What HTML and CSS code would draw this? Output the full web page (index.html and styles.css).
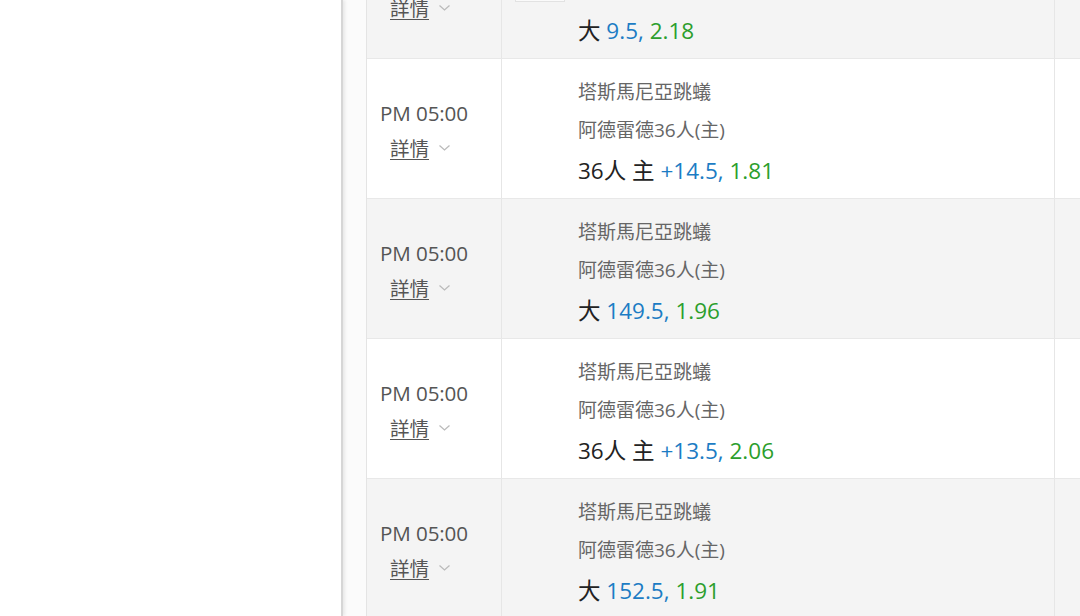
FILE: index.html
```html
<!DOCTYPE html>
<html lang="zh-Hant">
<head>
<meta charset="utf-8">
<link rel="stylesheet" href="styles.css">
</head>
<body>
<div class="layout">
  <aside class="side"></aside>
  <main class="main">
    <div class="table">
      <div class="row grey first">
        <div class="time-cell"><div class="time">PM 05:00</div><div class="detail"><a>詳情</a><svg class="chev" viewBox="0 0 12 8"><path d="M1 1.5 L6 6 L11 1.5" fill="none" stroke="#bbb" stroke-width="1.3"/></svg></div></div>
        <div class="bet-cell"><span class="stub"></span><div class="team">塔斯馬尼亞跳蟻</div><div class="team">阿德雷德36人(主)</div><div class="bet">大 <span class="blue">9.5,</span> <span class="green">2.18</span></div></div>
        <div class="extra"></div>
      </div>
      <div class="row">
        <div class="time-cell"><div class="time">PM 05:00</div><div class="detail"><a>詳情</a><svg class="chev" viewBox="0 0 12 8"><path d="M1 1.5 L6 6 L11 1.5" fill="none" stroke="#bbb" stroke-width="1.3"/></svg></div></div>
        <div class="bet-cell"><div class="team">塔斯馬尼亞跳蟻</div><div class="team">阿德雷德36人(主)</div><div class="bet">36人 主 <span class="blue">+14.5,</span> <span class="green">1.81</span></div></div>
        <div class="extra"></div>
      </div>
      <div class="row grey">
        <div class="time-cell"><div class="time">PM 05:00</div><div class="detail"><a>詳情</a><svg class="chev" viewBox="0 0 12 8"><path d="M1 1.5 L6 6 L11 1.5" fill="none" stroke="#bbb" stroke-width="1.3"/></svg></div></div>
        <div class="bet-cell"><div class="team">塔斯馬尼亞跳蟻</div><div class="team">阿德雷德36人(主)</div><div class="bet">大 <span class="blue">149.5,</span> <span class="green">1.96</span></div></div>
        <div class="extra"></div>
      </div>
      <div class="row">
        <div class="time-cell"><div class="time">PM 05:00</div><div class="detail"><a>詳情</a><svg class="chev" viewBox="0 0 12 8"><path d="M1 1.5 L6 6 L11 1.5" fill="none" stroke="#bbb" stroke-width="1.3"/></svg></div></div>
        <div class="bet-cell"><div class="team">塔斯馬尼亞跳蟻</div><div class="team">阿德雷德36人(主)</div><div class="bet">36人 主 <span class="blue">+13.5,</span> <span class="green">2.06</span></div></div>
        <div class="extra"></div>
      </div>
      <div class="row grey">
        <div class="time-cell"><div class="time">PM 05:00</div><div class="detail"><a>詳情</a><svg class="chev" viewBox="0 0 12 8"><path d="M1 1.5 L6 6 L11 1.5" fill="none" stroke="#bbb" stroke-width="1.3"/></svg></div></div>
        <div class="bet-cell"><div class="team">塔斯馬尼亞跳蟻</div><div class="team">阿德雷德36人(主)</div><div class="bet">大 <span class="blue">152.5,</span> <span class="green">1.91</span></div></div>
        <div class="extra"></div>
      </div>
    </div>
  </main>
</div>
</body>
</html>
```
FILE: styles.css
```css
html, body {
  margin: 0;
  padding: 0;
  height: 100%;
  overflow: hidden;
  background: #fff;
  font-family: "Open Sans", "Noto Sans CJK TC", sans-serif;
}
.layout {
  display: flex;
  height: 616px;
}
.side {
  width: 341px;
  flex: none;
  background: #fff;
  border-right: 2px solid #d6d6d6;
  box-shadow: 2px 0 3px rgba(0,0,0,0.08);
  position: relative;
  z-index: 1;
}
.main {
  flex: 1;
  background: #fbfbfb;
  padding-left: 23px;
  overflow: hidden;
}
.table {
  margin-top: -81px;
  border-left: 1px solid #e4e4e4;
  background: #fff;
}
.row {
  display: flex;
  height: 139px;
  border-bottom: 1px solid #e8e8e8;
  background: #fff;
}
.row.grey {
  background: #f4f4f4;
}
.time-cell {
  width: 135px;
  flex: none;
  border-right: 1px solid #e6e6e6;
  display: flex;
  flex-direction: column;
  justify-content: center;
  padding: 4px 0 0 13px;
  box-sizing: border-box;
  color: #555;
}
.time {
  font-size: 20.6px;
  line-height: 36px;
  letter-spacing: -0.1px;
}
.detail {
  line-height: 36px;
  padding-left: 10px;
  display: flex;
  align-items: center;
}
.detail a {
  font-size: 19.5px;
  color: #555;
  text-decoration: underline;
  text-underline-offset: 3px;
  text-decoration-thickness: 1px;
}
.chev {
  width: 13px;
  height: 8px;
  margin-left: 9px;
  margin-top: -1px;
}
.bet-cell {
  width: 553px;
  flex: none;
  border-right: 1px solid #e6e6e6;
  padding: 14px 0 0 76px;
  box-sizing: border-box;
  position: relative;
}
.stub {
  position: absolute;
  left: 13px;
  top: 78px;
  width: 48px;
  height: 3px;
  border: 1px solid #e2e2e2;
  background: #fafafa;
}
.team {
  font-size: 19px;
  line-height: 38px;
  color: #666;
}
.bet {
  font-size: 22.5px;
  line-height: 44px;
  color: #222;
}
.blue { color: #1c7cc4; }
.green { color: #2c9e2c; }
.extra {
  flex: 1;
}
```
